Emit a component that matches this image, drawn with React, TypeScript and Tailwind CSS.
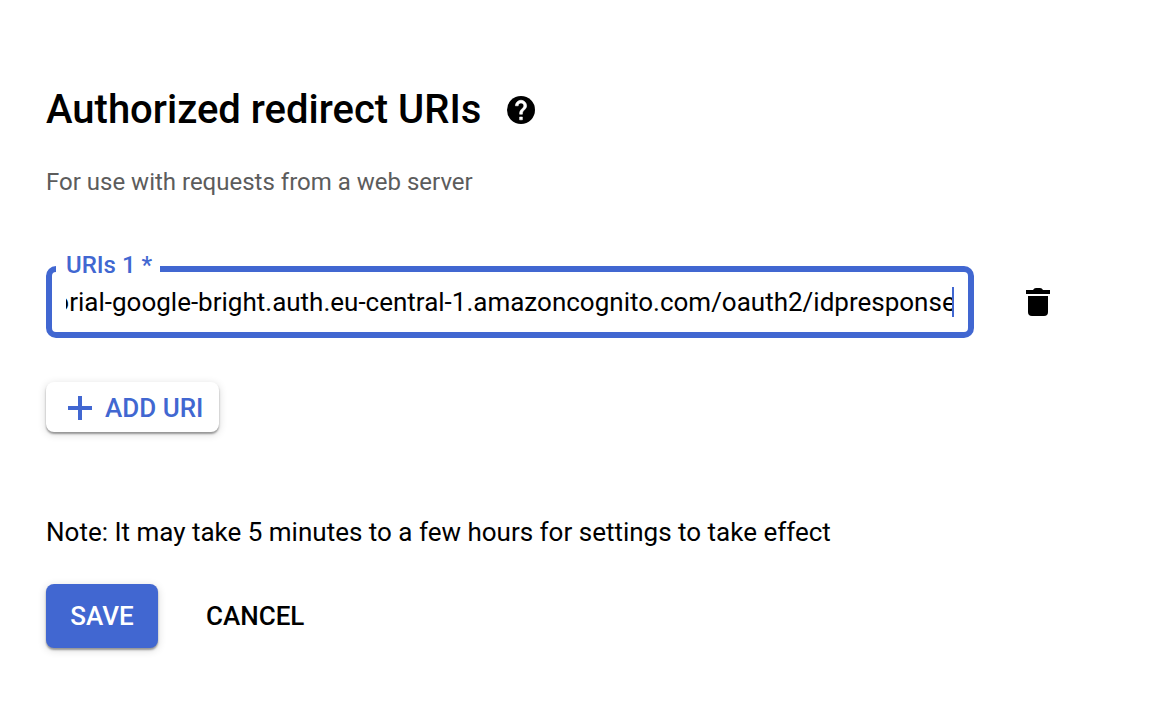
import { useLayoutEffect, useRef } from "react";

const uri =
  "https://tutorial-google-bright.auth.eu-central-1.amazoncognito.com/oauth2/idpresponse";

function HelpIcon() {
  return (
    <svg viewBox="2 2 20 20" className="size-7" fill="currentColor" aria-hidden="true">
      <circle cx="12" cy="12" r="10" />
      <path
        fill="#fff"
        stroke="#fff"
        strokeWidth="0.4"
        d="M13 19h-2v-2h2v2zm2.070-7.750l-.9.920C13.450 12.900 13 13.500 13 15h-2v-.5c0-1.100.450-2.100 1.170-2.830l1.240-1.260c.370-.360.590-.860.590-1.410 0-1.100-.9-2-2-2s-2 .9-2 2H8c0-2.210 1.790-4 4-4s4 1.790 4 4c0 .880-.360 1.680-.930 2.250z"
      />
    </svg>
  );
}

function TrashIcon() {
  return (
    <svg viewBox="0 0 24 28" className="h-7 w-6" fill="currentColor" aria-hidden="true">
      <path d="M0 2h7q1-2 3-2h4q2 0 3 2h7v4H0z" />
      <path d="M2 8h20v16a4 4 0 0 1-4 4H6a4 4 0 0 1-4-4z" />
    </svg>
  );
}

function PlusIcon() {
  return (
    <svg viewBox="0 0 24 24" className="size-6" fill="currentColor" aria-hidden="true">
      <path d="M10 0h4v10h10v4H14v10h-4V14H0v-4h10z" />
    </svg>
  );
}

function UriField() {
  const input = useRef<HTMLInputElement>(null);

  // Keep the end of a long URI in view, up to the caret.
  useLayoutEffect(() => {
    const el = input.current;
    if (el) el.scrollLeft = el.scrollWidth - el.clientWidth - 2;
  }, []);

  return (
    <div className="relative flex h-18 min-w-0 flex-1 items-center rounded-[10px] border-6 border-[#4167d1] px-3.5">
      <label
        htmlFor="uri-1"
        className="absolute -top-[21px] left-1 bg-white pr-2 pl-2.5 text-2xl leading-7 font-medium text-[#4167d1]"
      >
        URIs 1 *
      </label>
      <input
        id="uri-1"
        ref={input}
        type="text"
        required
        defaultValue={uri}
        className="h-10 w-full min-w-0 text-[26px] text-black caret-transparent outline-none"
      />
      <span className="absolute top-1/2 right-3.5 h-[30px] w-0.5 -translate-y-1/2 bg-[#4167d1]" />
    </div>
  );
}

export default function App() {
  return (
    <main className="min-h-screen bg-white pt-[86px] pr-[100px] pb-12 pl-[46px] font-['Roboto',sans-serif] text-black">
      <header>
        <div className="flex items-center gap-[26px]">
          <h1 className="text-[40px] leading-12 font-medium">Authorized redirect URIs</h1>
          <button type="button" aria-label="Help">
            <HelpIcon />
          </button>
        </div>
        <p className="mt-8 text-2xl text-[#5c5c5c]">For use with requests from a web server</p>
      </header>

      <form onSubmit={(e) => e.preventDefault()}>
        <div className="mt-[66px] flex items-center gap-7">
          <UriField />
          <button type="button" aria-label="Delete URI" className="p-6">
            <TrashIcon />
          </button>
        </div>

        <button
          type="button"
          className="mt-[42px] flex items-center gap-[13px] rounded-lg bg-white pt-1.5 pr-4 pb-1 pl-[22px] text-[26px] leading-10 font-medium text-[#4167d1] shadow-[0_2px_2px_rgba(0,0,0,0.35),0_2px_8px_rgba(0,0,0,0.16)]"
        >
          <PlusIcon />
          ADD URI
        </button>

        <p className="mt-20 text-[26px] leading-10">
          Note: It may take 5 minutes to a few hours for settings to take effect
        </p>

        <div className="mt-8 flex gap-6 text-[26px] font-medium">
          <button
            type="submit"
            className="h-16 min-w-28 rounded-lg bg-[#4167d1] px-6 text-white shadow-[0_2px_2px_rgba(0,0,0,0.35),0_2px_8px_rgba(0,0,0,0.16)]"
          >
            SAVE
          </button>
          <button type="button" className="h-16 px-6">
            CANCEL
          </button>
        </div>
      </form>
    </main>
  );
}
